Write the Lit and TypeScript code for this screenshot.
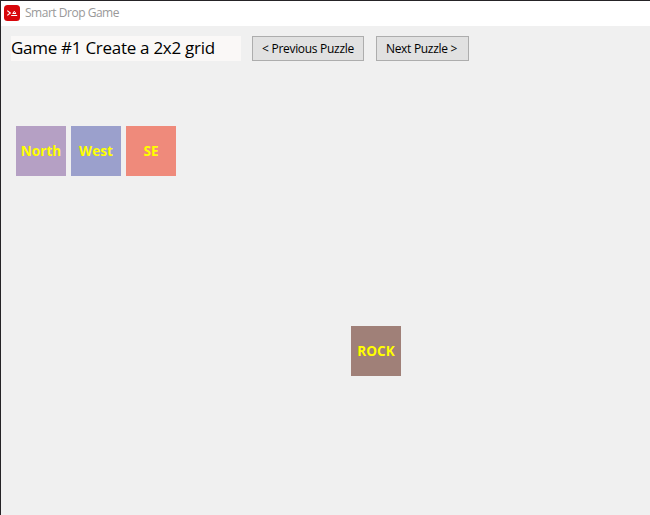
import { LitElement, html, css } from "lit";
import { customElement, property } from "lit/decorators.js";

@customElement("puzzle-tile")
class PuzzleTile extends LitElement {
  @property() label = "";
  @property() color = "";

  static styles = css`
    :host { display: block; width: 50px; height: 50px; }
    .tile {
      width: 50px; height: 50px;
      display: flex; align-items: center; justify-content: center;
      color: #ffff00;
      font: 700 13.5px/18px "Open Sans", "Noto Sans", sans-serif;
      letter-spacing: 0.1px;
      white-space: nowrap;
    }
  `;

  render() {
    return html`<div class="tile" style="background:${this.color}">${this.label}</div>`;
  }
}

@customElement("app-root")
class AppRoot extends LitElement {
  static styles = css`
    :host {
      display: block;
      box-sizing: border-box;
      width: 650px;
      height: 515px;
      border-top: 1px solid #252326;
      border-left: 1px solid #252326;
      background: #f0f0f0;
      overflow: hidden;
      font-family: "Open Sans", "Noto Sans", sans-serif;
      color: #000;
    }
    .titlebar {
      box-sizing: border-box;
      display: flex; align-items: flex-start;
      height: 25px;
      padding: 4px 0 0 3px;
      gap: 5px;
      background: #fff;
      color: #999;
      font-size: 12px;
      line-height: 16px;
      letter-spacing: -0.48px;
    }
    .logo { display: block; width: 16px; height: 16px; }
    .toolbar {
      display: flex; align-items: flex-start;
      padding: 10px 0 0 10px;
    }
    .heading {
      width: 230px; height: 25px;
      margin-right: 11px;
      background: #faf8f7;
      font-size: 17px;
      line-height: 24px;
      letter-spacing: -0.28px;
      white-space: nowrap;
    }
    .btn {
      box-sizing: border-box;
      height: 25px;
      padding: 0;
      margin: 0;
      border: 1px solid #adadad;
      border-radius: 0;
      background: #e1e1e1;
      color: #000;
      font: 12px/16px "Open Sans", "Noto Sans", sans-serif;
      letter-spacing: -0.3px;
      white-space: nowrap;
    }
    .prev { width: 112px; margin-right: 12px; }
    .next { width: 93px; padding-right: 2px; }
    .board { position: relative; height: 454px; }
    .spot { position: absolute; }
    .north { left: 15px; top: 65px; }
    .west { left: 70px; top: 65px; }
    .southeast { left: 125px; top: 65px; }
    .rock { left: 350px; top: 265px; }
  `;

  render() {
    return html`
      <div class="titlebar">
        <svg class="logo" viewBox="0 0 16 16">
          <rect width="16" height="16" rx="3.5" fill="#d8070b" />
          <path d="M3.3 5.6 6.3 8 3.3 10.4" fill="none" stroke="#fff" stroke-width="1.2" />
          <path d="M7.2 10.5H13.2M8.5 8.5H12M8.9 8.2 10.3 6.3 11.7 8.2" fill="none" stroke="#fff" stroke-width="1" />
        </svg>
        <span>Smart Drop Game</span>
      </div>
      <div class="toolbar">
        <div class="heading">Game #1 Create a 2x2 grid</div>
        <button class="btn prev">&lt; Previous Puzzle</button>
        <button class="btn next">Next Puzzle &gt;</button>
      </div>
      <div class="board">
        <puzzle-tile class="spot north" label="North" color="#b5a0c4"></puzzle-tile>
        <puzzle-tile class="spot west" label="West" color="#9ba0cc"></puzzle-tile>
        <puzzle-tile class="spot southeast" label="SE" color="#ef8a7b"></puzzle-tile>
        <puzzle-tile class="spot rock" label="ROCK" color="#a08078"></puzzle-tile>
      </div>
    `;
  }
}
